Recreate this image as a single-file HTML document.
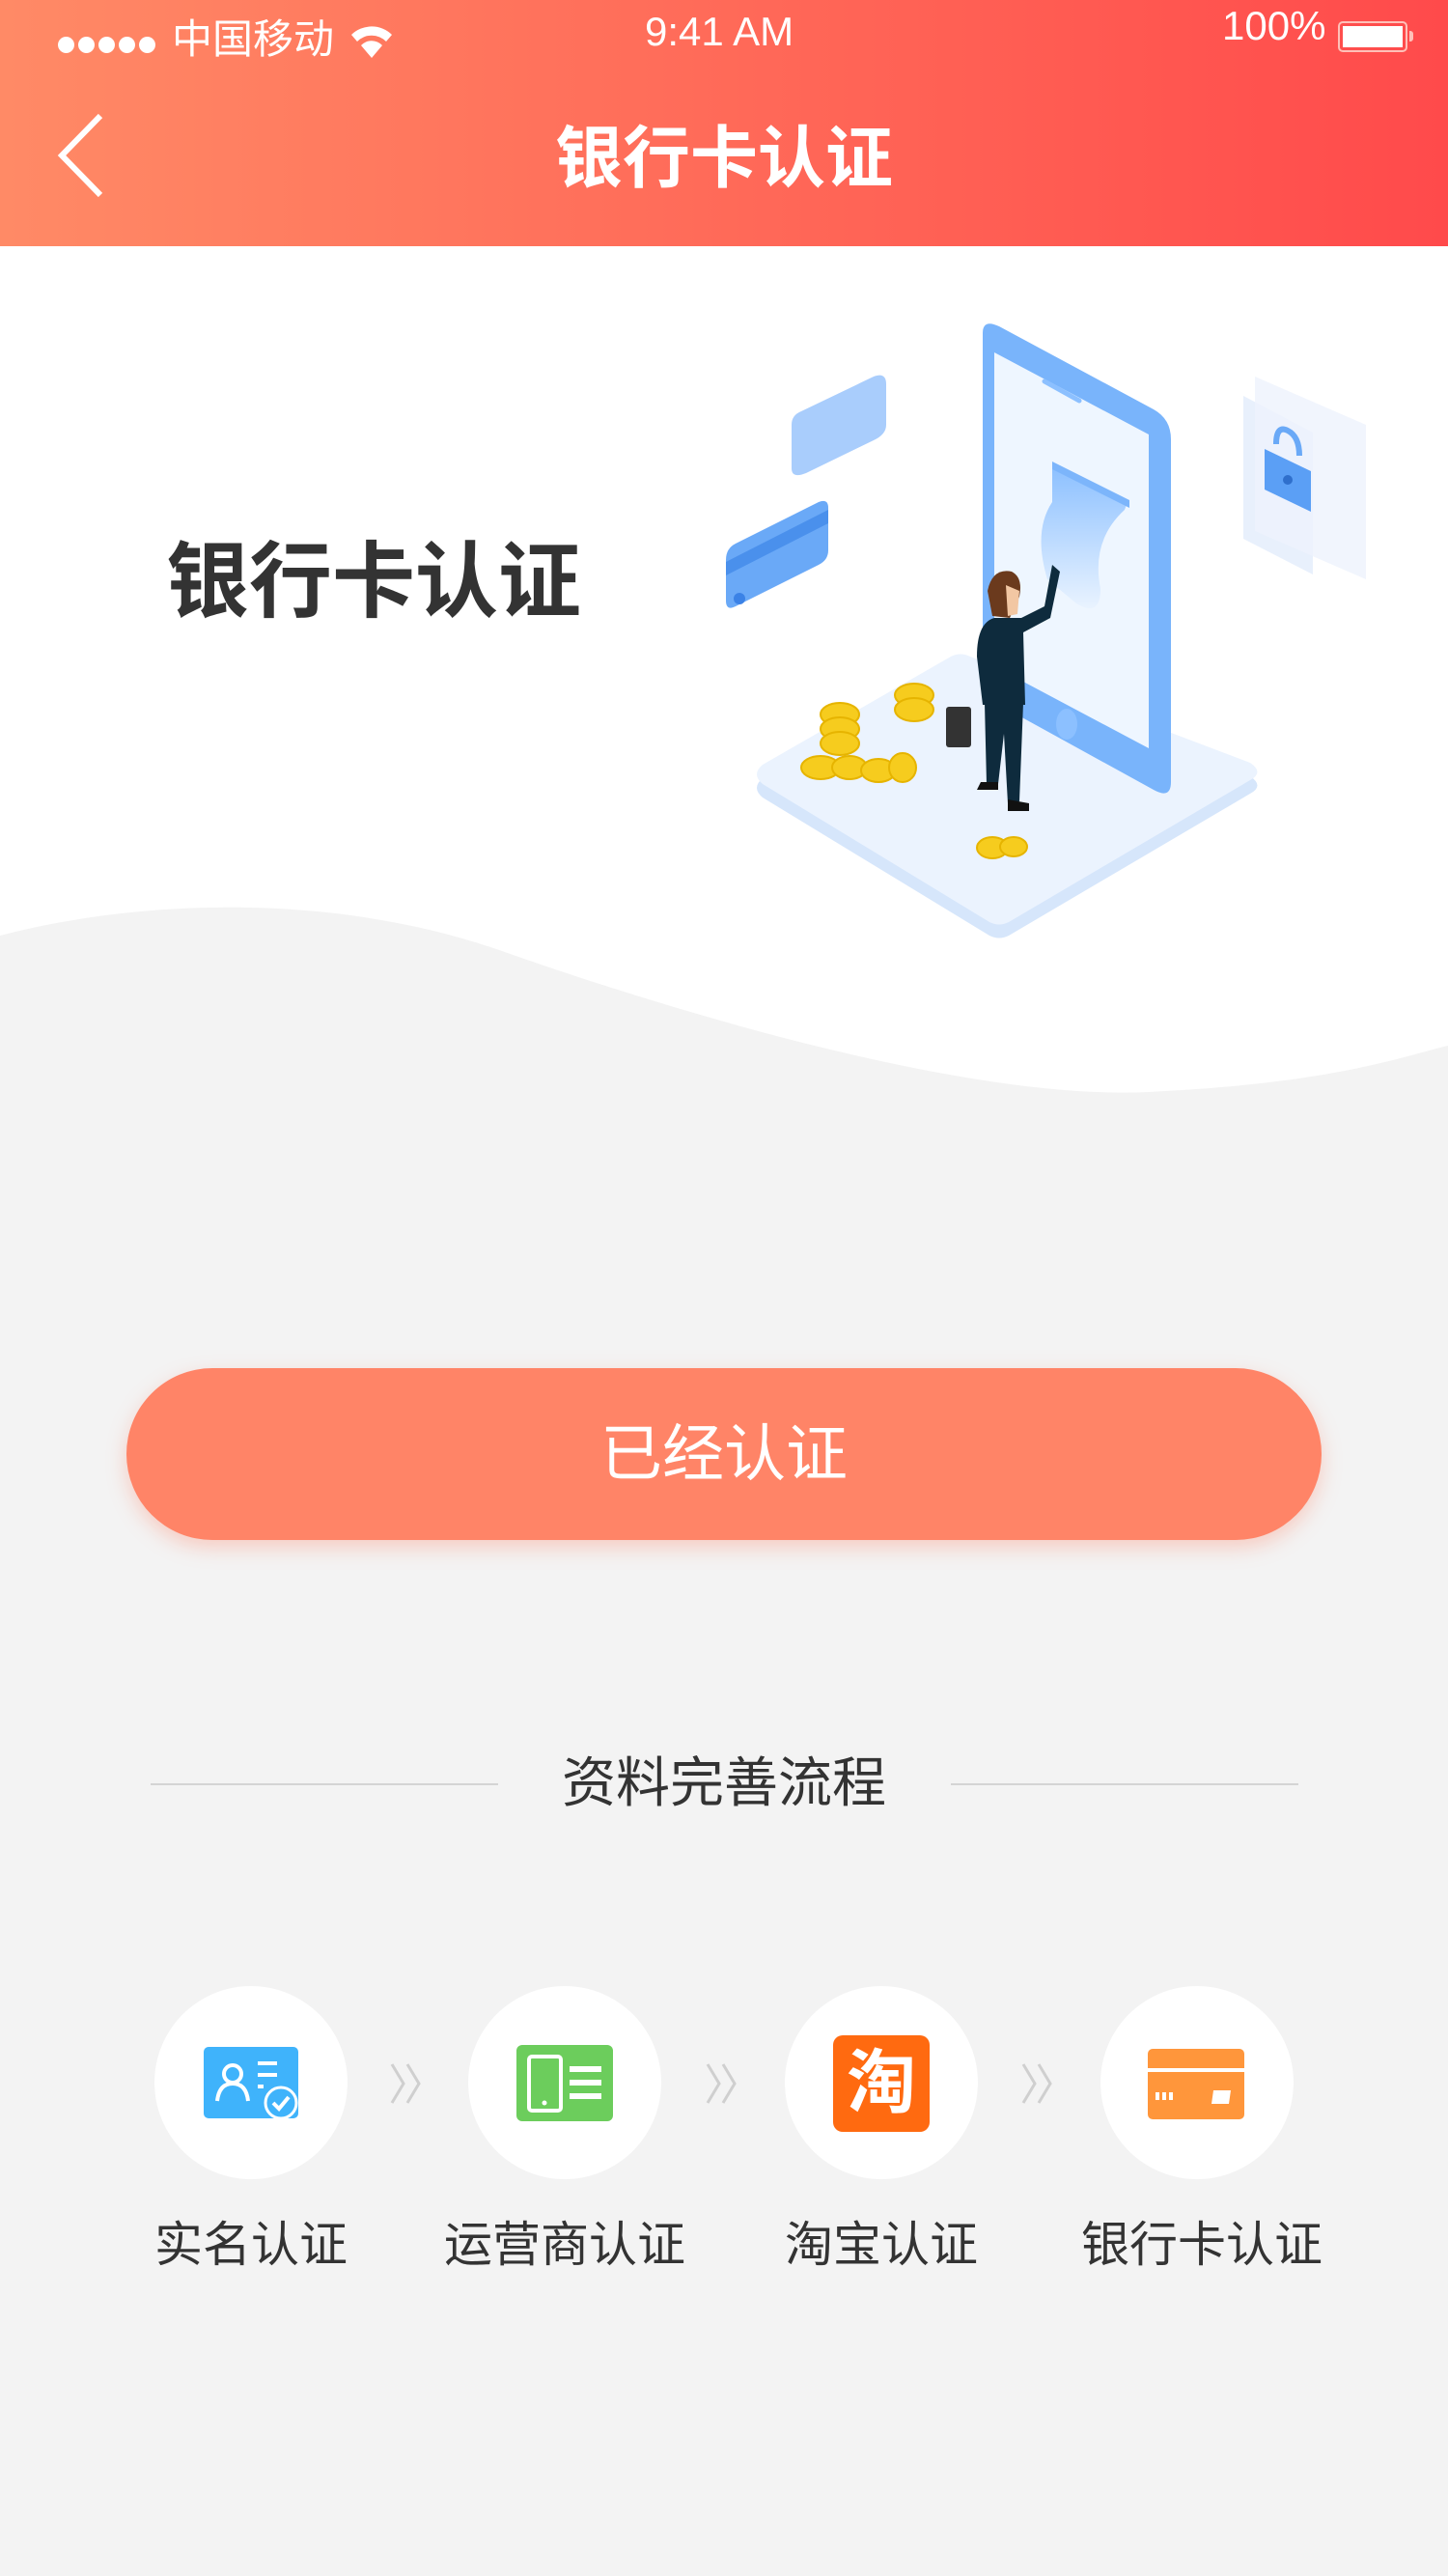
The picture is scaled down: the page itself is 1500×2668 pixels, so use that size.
<!DOCTYPE html>
<html><head><meta charset="utf-8"><style>
*{margin:0;padding:0;box-sizing:border-box}
body{width:1500px;height:2668px;background:#f3f3f3;position:relative;overflow:hidden;font-family:"Liberation Sans","Noto Sans CJK SC",sans-serif}
.hdr{position:absolute;left:0;top:0;width:1500px;height:255px;background:linear-gradient(90deg,#ff8a66,#ff4a4b)}
.abs{position:absolute}
.t{color:#fff;white-space:nowrap}
.lbl{position:absolute;top:2294px;font-size:50px;color:#333;width:300px;text-align:center;line-height:62px}
.circ{position:absolute;width:200px;height:200px;border-radius:50%;background:#fff;top:2057px}
</style></head><body>
<div class="hdr"></div>
<div class="abs" style="left:60px;top:38px;display:flex;gap:4px">
<span style="width:17px;height:17px;border-radius:50%;background:#fff"></span><span style="width:17px;height:17px;border-radius:50%;background:#fff"></span><span style="width:17px;height:17px;border-radius:50%;background:#fff"></span><span style="width:17px;height:17px;border-radius:50%;background:#fff"></span><span style="width:17px;height:17px;border-radius:50%;background:#fff"></span></div>
<div class="abs t" style="left:178px;top:16px;font-size:42px;line-height:50px">中国移动</div>
<svg class="abs" style="left:360px;top:24px" width="50" height="40" viewBox="0 0 50 40"><path d="M4 12 A30 30 0 0 1 46 12 L40 19 A21 21 0 0 0 10 19Z M14 23 A15 15 0 0 1 36 23 L25 36Z" fill="#fff"/></svg>
<div class="abs t" style="left:668px;top:10px;font-size:42px;line-height:46px">9:41 AM</div>
<div class="abs t" style="left:1266px;top:4px;font-size:42px;line-height:46px">100%</div>
<div class="abs" style="left:1386px;top:22px;width:72px;height:32px;border:2px solid #ffc0b8;border-radius:5px;padding:3px"><div style="width:100%;height:100%;background:#fff"></div></div>
<div class="abs" style="left:1460px;top:32px;width:4px;height:11px;background:#ffc0b8;border-radius:0 3px 3px 0"></div>
<svg class="abs" style="left:56px;top:116px" width="56" height="90" viewBox="0 0 56 90"><path d="M48 4 L8 45 L48 86" fill="none" stroke="#fff" stroke-width="6"/></svg>
<div class="abs t" style="left:0;width:1500px;text-align:center;top:122px;font-size:70px;font-weight:bold;line-height:84px">银行卡认证</div>

<div class="abs" style="left:0;top:255px;width:1500px;height:900px;background:#fff"></div>
<svg class="abs" style="left:0;top:900px" width="1500" height="300" viewBox="0 900 1500 300"><path d="M0 969 C150 930 350 925 520 985 S1000 1140 1190 1131 S1450 1095 1500 1083 L1500 1200 L0 1200Z" fill="#f3f3f3"/></svg>

<div class="abs" style="left:172px;top:548px;font-size:86px;font-weight:bold;color:#333;line-height:110px">银行卡认证</div>

<svg class="abs" style="left:740px;top:320px" width="700" height="660" viewBox="740 320 700 660">
<defs><linearGradient id="g1" x1="0" y1="0" x2="0" y2="1"><stop offset="0" stop-color="#8cc0ff"/><stop offset="1" stop-color="#e9f3ff"/></linearGradient></defs>
<path d="M790 792 L985 680 Q995 675 1005 680 L1295 790 Q1310 800 1295 808 L1045 955 Q1035 960 1025 955 L790 812 Q778 802 790 792Z" fill="#d6e6fb" transform="translate(0,14)"/>
<path d="M790 792 L985 680 Q995 675 1005 680 L1295 790 Q1310 800 1295 808 L1045 955 Q1035 960 1025 955 L790 812 Q778 802 790 792Z" fill="#ebf3fe"/>
<path d="M1018 345 Q1018 330 1035 338 L1195 424 Q1213 434 1213 455 L1213 810 Q1213 828 1195 818 L1035 730 Q1018 720 1018 705 Z" fill="#79b4fb"/>
<path d="M1030 365 L1190 450 L1190 775 L1030 690 Z" fill="#eef6ff"/>
<path d="M1082 395 L1118 415" stroke="#8cc0ff" stroke-width="5" stroke-linecap="round"/>
<path d="M1090 483 L1168 520 L1165 528 Q1130 560 1140 610 Q1140 640 1115 625 L1085 600 Q1070 550 1090 520Z" fill="url(#g1)"/>
<path d="M1090 478 L1170 518 L1170 526 L1090 486Z" fill="#7cb5fb"/>
<ellipse cx="1105" cy="750" rx="11" ry="16" fill="#8cc0ff"/>
<path d="M820 440 Q820 430 830 426 L905 390 Q918 385 918 398 L918 440 Q918 450 905 456 L835 490 Q820 496 820 485Z" fill="#a9cdfc"/>
<path d="M866 510 L908 487 M866 502 L906 480 M866 494 L904 472" stroke="#fff" stroke-width="3"/>
<path d="M752 580 Q752 568 762 563 L848 520 Q858 516 858 526 L858 570 Q858 580 848 585 L762 628 Q752 633 752 622Z" fill="#6aa9f7"/>
<path d="M752 582 L858 528 L858 542 L752 596Z" fill="#4a90ec"/>
<circle cx="766" cy="620" r="6" fill="#3b82e6"/>
<path d="M1288 410 L1360 448 L1360 595 L1288 558Z" fill="#e6eefc" opacity=".9"/>
<path d="M1300 390 L1415 440 L1415 600 L1300 550Z" fill="#eef3fd" opacity=".8"/>
<path d="M1322 460 Q1322 440 1334 446 Q1346 452 1346 472" fill="none" stroke="#6aa9f7" stroke-width="6"/>
<path d="M1310 465 L1358 488 L1358 530 L1310 507Z" fill="#5b9ff5"/>
<circle cx="1334" cy="497" r="5" fill="#2f6fcc"/>
<!-- man -->
<path d="M1023 612 Q1028 588 1048 592 Q1060 598 1056 618 L1046 640 L1028 638Z" fill="#6b3a1d"/>
<path d="M1042 606 L1056 612 L1054 636 L1044 638Z" fill="#f2c7a3"/>
<path d="M1090 585 L1098 592 L1088 640 L1060 655 L1062 730 L1018 730 L1012 680 Q1012 645 1030 640 L1058 640 L1082 628Z" fill="#0e2b3d"/>
<path d="M1020 728 L1060 728 L1056 830 L1044 832 L1040 760 L1034 812 L1022 812Z" fill="#0e2b3d"/>
<path d="M1044 828 L1066 832 L1066 840 L1044 840Z M1016 810 L1034 810 L1034 818 L1012 818Z" fill="#111"/>
<rect x="980" y="732" width="26" height="42" fill="#333" rx="3"/>
<g fill="#f6cc1e" stroke="#e6b400" stroke-width="2">
<ellipse cx="870" cy="740" rx="20" ry="12"/><ellipse cx="870" cy="755" rx="20" ry="12"/><ellipse cx="870" cy="770" rx="20" ry="12"/>
<ellipse cx="947" cy="720" rx="20" ry="12"/><ellipse cx="947" cy="735" rx="20" ry="12"/>
<ellipse cx="850" cy="795" rx="20" ry="12"/><ellipse cx="880" cy="795" rx="18" ry="12"/><ellipse cx="910" cy="798" rx="18" ry="12"/><ellipse cx="935" cy="795" rx="14" ry="15"/>
<ellipse cx="1028" cy="878" rx="16" ry="11"/><ellipse cx="1050" cy="877" rx="14" ry="10"/>
</g>
</svg>

<div class="abs" style="left:131px;top:1417px;width:1238px;height:178px;border-radius:89px;background:#ff8467;box-shadow:0 8px 20px rgba(255,132,103,.35);color:#fff;font-size:64px;text-align:center;line-height:178px">已经认证</div>

<div class="abs" style="left:156px;top:1847px;width:360px;height:2px;background:#d4d4d4"></div>
<div class="abs" style="left:985px;top:1847px;width:360px;height:2px;background:#d4d4d4"></div>
<div class="abs" style="left:0;width:1500px;text-align:center;top:1812px;font-size:56px;color:#333;line-height:70px">资料完善流程</div>

<div class="circ" style="left:160px"></div><div class="circ" style="left:485px"></div><div class="circ" style="left:813px"></div><div class="circ" style="left:1140px"></div>
<svg class="abs" style="left:211px;top:2120px" width="100" height="76" viewBox="0 0 100 76"><rect x="0" y="0" width="98" height="74" rx="5" fill="#3fb3fb"/><circle cx="30" cy="28" r="9" fill="none" stroke="#fff" stroke-width="4"/><path d="M14 56 Q16 38 30 38 Q44 38 46 56" fill="none" stroke="#fff" stroke-width="4"/><path d="M56 17 H76 M56 29 H76 M56 41 H62" stroke="#fff" stroke-width="4"/><circle cx="80" cy="58" r="16" fill="#3fb3fb" stroke="#fff" stroke-width="3"/><path d="M72 58 L78 64 L88 52" fill="none" stroke="#fff" stroke-width="4"/></svg>
<svg class="abs" style="left:535px;top:2118px" width="101" height="80" viewBox="0 0 101 80"><rect x="0" y="0" width="100" height="79" rx="6" fill="#6ccd5c"/><rect x="13" y="12" width="33" height="56" rx="3" fill="none" stroke="#fff" stroke-width="4"/><circle cx="29" cy="60" r="2.5" fill="#fff"/><path d="M55 25 H88 M55 39 H88 M55 53 H88" stroke="#fff" stroke-width="6"/></svg>
<div class="abs" style="left:863px;top:2108px;width:100px;height:100px;border-radius:10px;background:#ff6a10;color:#fff;font-size:72px;font-weight:bold;text-align:center;line-height:100px">淘</div>
<svg class="abs" style="left:1189px;top:2122px" width="100" height="74" viewBox="0 0 100 74"><rect x="0" y="0" width="100" height="73" rx="5" fill="#ff963b"/><rect x="0" y="20" width="100" height="4" fill="#fff"/><path d="M10 45 V53 M17 45 V53 M24 45 V53" stroke="#fff" stroke-width="4"/><path d="M68 43 H86 L84 57 H66Z" fill="#fff"/></svg>
<svg class="abs" style="left:404px;top:2137px" width="38" height="42" viewBox="0 0 38 42"><path d="M2 1 L14 21 L2 41 M18 1 L30 21 L18 41" fill="none" stroke="#cfcfcf" stroke-width="3"/></svg>
<svg class="abs" style="left:731px;top:2137px" width="38" height="42" viewBox="0 0 38 42"><path d="M2 1 L14 21 L2 41 M18 1 L30 21 L18 41" fill="none" stroke="#cfcfcf" stroke-width="3"/></svg>
<svg class="abs" style="left:1058px;top:2137px" width="38" height="42" viewBox="0 0 38 42"><path d="M2 1 L14 21 L2 41 M18 1 L30 21 L18 41" fill="none" stroke="#cfcfcf" stroke-width="3"/></svg>

<div class="lbl" style="left:110px">实名认证</div>
<div class="lbl" style="left:435px">运营商认证</div>
<div class="lbl" style="left:763px">淘宝认证</div>
<div class="lbl" style="left:1095px">银行卡认证</div>
</body></html>
